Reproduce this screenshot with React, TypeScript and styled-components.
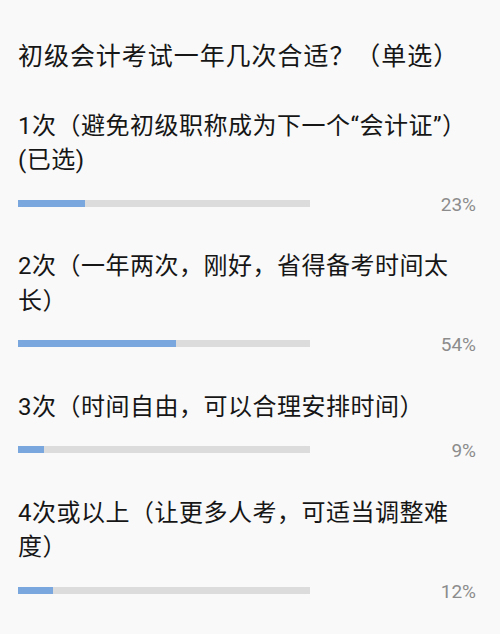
import React from "react";
import styled, { createGlobalStyle } from "styled-components";

const GlobalStyle = createGlobalStyle`
  html, body {
    margin: 0;
    padding: 0;
    background: #f9f9f9;
  }
  body {
    font-family: Roboto, "Noto Sans CJK SC", sans-serif;
    -webkit-font-smoothing: antialiased;
  }
`;

const Page = styled.div`
  width: 500px;
  height: 634px;
  box-sizing: border-box;
  padding: 40px 25px 0 18px;
  display: flex;
  flex-direction: column;
  gap: 34px;
  background: #f9f9f9;
  overflow: hidden;
`;

const Title = styled.h1`
  margin: 0;
  font-size: 25px;
  font-weight: 400;
  line-height: 34.5px;
  color: #161616;
  letter-spacing: 0.95px;
`;

const Option = styled.div`
  display: flex;
  flex-direction: column;
  gap: 13.5px;
`;

const Label = styled.div`
  font-size: 24px;
  font-weight: 400;
  line-height: 34.5px;
  color: #161616;
  letter-spacing: 0.5px;
  padding-right: 7px;
`;

const Selected = styled.span`
  display: block;
`;

const BarRow = styled.div`
  display: flex;
  align-items: center;
  height: 24px;
`;

const Track = styled.div`
  width: 292px;
  height: 7px;
  background: #dcdcdc;
  display: flex;
`;

const Fill = styled.div`
  height: 100%;
  background: #7aa7de;
`;

const Percent = styled.span`
  margin-left: auto;
  margin-right: -1px;
  padding-top: 3px;
  font-size: 19px;
  color: #8c8c8c;
  line-height: 24px;
`;

const options = [
  { label: "1次（避免初级职称成为下一个“会计证”）", selected: true, pct: 23 },
  { label: "2次（一年两次，刚好，省得备考时间太长）", selected: false, pct: 54 },
  { label: "3次（时间自由，可以合理安排时间）", selected: false, pct: 9 },
  { label: "4次或以上（让更多人考，可适当调整难度）", selected: false, pct: 12 },
];

export default function App() {
  return (
    <>
      <GlobalStyle />
      <Page>
        <Title>初级会计考试一年几次合适？（单选）</Title>
        {options.map((o) => (
          <Option key={o.label}>
            <Label>
              {o.label}
              {o.selected && <Selected>(已选)</Selected>}
            </Label>
            <BarRow>
              <Track>
                <Fill style={{ width: `${o.pct}%` }} />
              </Track>
              <Percent>{o.pct}%</Percent>
            </BarRow>
          </Option>
        ))}
      </Page>
    </>
  );
}
